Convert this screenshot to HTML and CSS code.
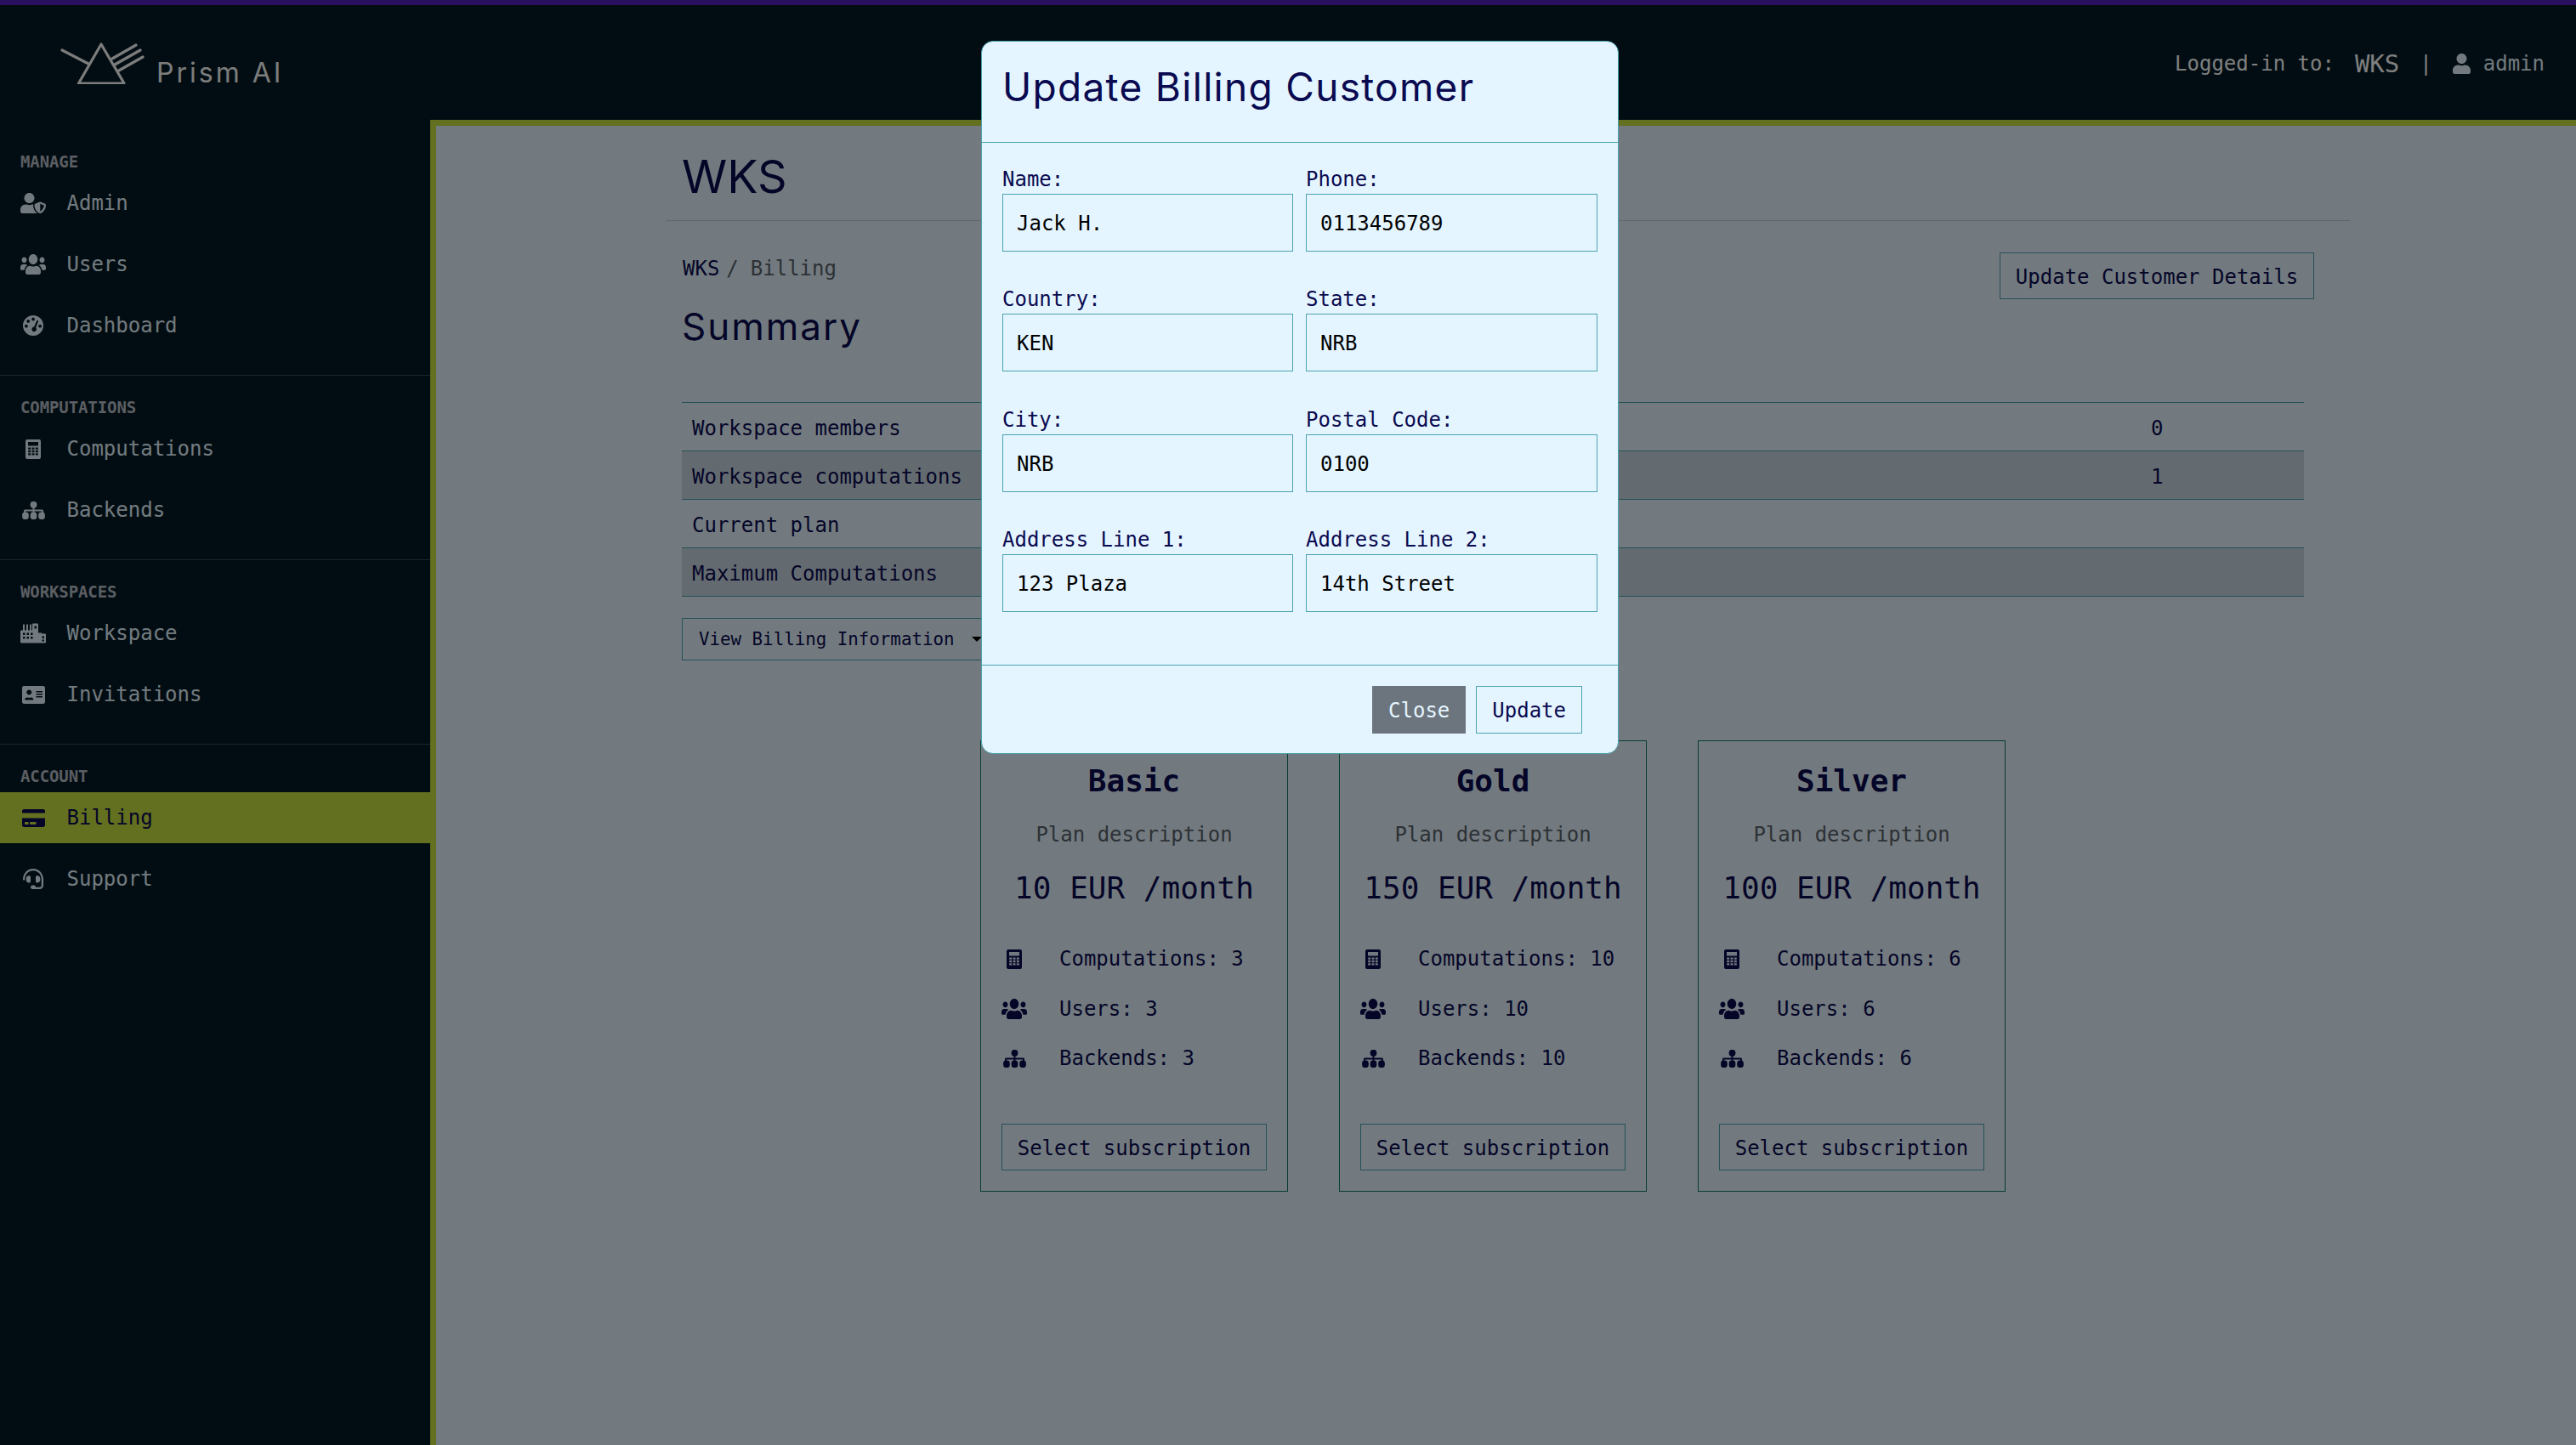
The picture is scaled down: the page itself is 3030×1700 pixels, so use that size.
FILE: index.html
```html
<!DOCTYPE html>
<html lang="en">
<head>
<meta charset="utf-8">
<title>Prism AI - Billing</title>
<link rel="stylesheet" href="styles.css">
</head>
<body>
<svg class="sprite" xmlns="http://www.w3.org/2000/svg">
  <symbol id="i-user" viewBox="0 0 448 512"><path d="M224 256c70.7 0 128-57.3 128-128S294.7 0 224 0 96 57.3 96 128s57.3 128 128 128zm89.6 32h-16.7c-22.2 10.2-46.9 16-72.9 16s-50.6-5.8-72.9-16h-16.7C60.2 288 0 348.2 0 422.4V464c0 26.5 21.5 48 48 48h352c26.5 0 48-21.5 48-48v-41.6c0-74.2-60.2-134.4-134.4-134.4z"/></symbol>
  <symbol id="i-admin" viewBox="0 0 640 512"><path d="M622.3 271.1l-115.2-45c-4.1-1.6-12.6-3.7-22.2 0l-115.2 45c-10.7 4.2-17.7 14-17.7 24.9 0 111.6 68.7 188.8 132.9 213.9 9.6 3.7 18 1.6 22.2 0C558.4 489.9 640 420.5 640 296c0-10.9-7-20.7-17.7-24.9zM496 462.4V273.3l95.5 37.3c-5.6 87.1-60.9 135.4-95.5 151.8zM224 256c70.7 0 128-57.3 128-128S294.7 0 224 0 96 57.3 96 128s57.3 128 128 128zm96 40c0-2.5.8-4.7 1.1-7.2-2.5-.1-4.9-.8-7.5-.8h-16.7c-22.2 10.2-46.9 16-72.9 16s-50.6-5.8-72.9-16h-16.7C60.2 288 0 348.2 0 422.4V464c0 26.5 21.5 48 48 48h352c6.8 0 13.3-1.5 19.2-4-54-42.9-99.2-116.7-99.2-212z"/></symbol>
  <symbol id="i-users" viewBox="0 32 640 448" preserveAspectRatio="none"><path d="M96 224c35.3 0 64-28.7 64-64s-28.7-64-64-64-64 28.7-64 64 28.7 64 64 64zm448 0c35.3 0 64-28.7 64-64s-28.7-64-64-64-64 28.7-64 64 28.7 64 64 64zm32 32h-64c-17.6 0-33.5 7.1-45.1 18.6 40.3 22.1 68.9 62 75.1 109.4h66c17.7 0 32-14.3 32-32v-32c0-35.3-28.7-64-64-64zm-256 0c61.9 0 112-50.1 112-112S381.9 32 320 32 208 82.1 208 144s50.1 112 112 112zm76.8 32h-8.3c-20.8 10-43.9 16-68.5 16s-47.6-6-68.5-16h-8.3C179.6 288 128 339.6 128 403.2V432c0 26.5 21.5 48 48 48h288c26.5 0 48-21.5 48-48v-28.8c0-63.6-51.6-115.2-115.2-115.2zm-223.7-13.4C161.5 263.1 145.6 256 128 256H64c-35.3 0-64 28.7-64 64v32c0 17.7 14.3 32 32 32h65.9c6.3-47.4 34.9-87.3 75.2-109.4z"/></symbol>
  <symbol id="i-gauge" viewBox="0 0 24 24"><path fill-rule="evenodd" d="M12 0a12 12 0 1 0 0 24a12 12 0 1 0 0-24zM12 2.6a1.9 1.9 0 1 0 0 3.8a1.9 1.9 0 1 0 0-3.8zM6.2 5a1.9 1.9 0 1 0 0 3.8a1.9 1.9 0 1 0 0-3.8zM3.9 10.8a1.9 1.9 0 1 0 0 3.8a1.9 1.9 0 1 0 0-3.8zM20.1 10.8a1.9 1.9 0 1 0 0 3.8a1.9 1.9 0 1 0 0-3.8zM16.6 5.6L13.1 13.6a2.8 2.8 0 1 0 2.1 .9L18.2 6.4z"/></symbol>
  <symbol id="i-calc" viewBox="0 0 18 23"><path fill-rule="evenodd" d="M2 0H16Q18 0 18 2V21Q18 23 16 23H2Q0 23 0 21V2Q0 0 2 0ZM3 3V7.4H15V3ZM3.2 9.4V11.8H6.2V9.4ZM7.5 9.4V11.8H10.5V9.4ZM11.8 9.4V11.8H14.8V9.4ZM3.2 12.8V15.2H6.2V12.8ZM7.5 12.8V15.2H10.5V12.8ZM11.8 12.8V15.2H14.8V12.8ZM3.2 16.2V18.6H6.2V16.2ZM7.5 16.2V18.6H10.5V16.2ZM11.8 16.2V18.6H14.8V16.2Z"/></symbol>
  <symbol id="i-tree" viewBox="0 0 28 22"><path d="M13 6h2v4h9.5q1.5 0 1.5 1.5V14h-2v-2h-9v2h-2v-2H4v2H2v-2.500Q2 10 3.500 10H13z"/><rect x="10" y="0" width="8" height="8" rx="3.500"/><rect x="0" y="13" width="8" height="9" rx="3.500"/><rect x="10" y="13" width="8" height="9" rx="3.500"/><rect x="20" y="13" width="8" height="9" rx="3.500"/></symbol>
  <symbol id="i-city" viewBox="0 0 30 23"><path fill-rule="evenodd" d="M1 23Q0 23 0 22V9Q0 8 1 8H3V1H5V8H7V1H9V8H11V1H13V8H14V1Q14 0 15 0H20Q21 0 21 1V11H25V12H29Q30 12 30 13V22Q30 23 29 23ZM3 11V13.500H5.500V11ZM7.500 11V13.500H10V11ZM12 11V13.500H14.500V11ZM3 15.500V18H5.500V15.500ZM7.500 15.500V18H10V15.500ZM12 15.500V18H14.500V15.500ZM16.500 3V6H19V3ZM25.500 15V17.500H28V15ZM25.500 19V21H28V19Z"/></symbol>
  <symbol id="i-idcard" viewBox="0 0 576 448"><path fill-rule="evenodd" d="M528 0H48C21.500 0 0 21.500 0 48v352c0 26.500 21.500 48 48 48h480c26.500 0 48-21.500 48-48V48c0-26.500-21.500-48-48-48zM360 128c-4.400 0-8 3.600-8 8v16c0 4.400 3.600 8 8 8h144c4.400 0 8-3.600 8-8v-16c0-4.400-3.600-8-8-8zm0 64c-4.400 0-8 3.600-8 8v16c0 4.400 3.600 8 8 8h144c4.400 0 8-3.600 8-8v-16c0-4.400-3.600-8-8-8zm0 64c-4.400 0-8 3.600-8 8v16c0 4.400 3.600 8 8 8h144c4.400 0 8-3.600 8-8v-16c0-4.400-3.600-8-8-8zM176 96c35.300 0 64 28.700 64 64s-28.700 64-64 64-64-28.700-64-64 28.700-64 64-64zM67.100 332.200C75.500 306.500 99.600 288 128 288h8.200c12.300 5.100 25.700 8 39.800 8s27.600-2.900 39.800-8h8.200c28.400 0 52.500 18.500 60.900 44.200 3.200 9.900-5.200 19.800-15.600 19.800H82.700c-10.400 0-18.800-10-15.600-19.800z"/></symbol>
  <symbol id="i-card" viewBox="0 0 576 448"><path d="M0 400c0 26.500 21.500 48 48 48h480c26.500 0 48-21.500 48-48V224H0v176zm192-68c0-6.600 5.400-12 12-12h136c6.600 0 12 5.400 12 12v40c0 6.600-5.400 12-12 12H204c-6.600 0-12-5.400-12-12v-40zm-128 0c0-6.600 5.400-12 12-12h72c6.600 0 12 5.400 12 12v40c0 6.600-5.400 12-12 12H76c-6.600 0-12-5.400-12-12v-40zM576 48v48H0V48C0 21.500 21.500 0 48 0h480c26.500 0 48 21.500 48 48z"/></symbol>
  <symbol id="i-headset" viewBox="0 0 512 512"><path d="M192 208c0-17.670-14.330-32-32-32h-16c-35.350 0-64 28.650-64 64v48c0 35.350 28.650 64 64 64h16c17.670 0 32-14.330 32-32V208zm176 144c35.350 0 64-28.650 64-64v-48c0-35.350-28.650-64-64-64h-16c-17.670 0-32 14.330-32 32v112c0 17.670 14.330 32 32 32h16zM256 0C113.180 0 4.580 118.830 0 256v16c0 8.840 7.160 16 16 16h16c8.840 0 16-7.160 16-16v-16c0-114.690 93.310-208 208-208s208 93.310 208 208h-.12c.08 2.430.12 165.720.12 165.720 0 23.350-18.930 42.280-42.280 42.280H320c0-26.510-21.490-48-48-48h-32c-26.510 0-48 21.490-48 48s21.490 48 48 48h181.720c49.860 0 90.280-40.420 90.280-90.280V256C507.420 118.830 398.820 0 256 0z"/></symbol>
</svg>

<header class="navbar">
  <div class="brand">
    <svg class="logo" viewBox="0 0 100 50"><path d="M49 3L22.500 49H76z"/><path d="M3 10L34 26"/><path d="M62 20L90 4M65 27L95 10M68 35L98 18"/></svg>
    <span class="brand-name">Prism AI</span>
  </div>
  <div class="session">
    <span>Logged-in to:</span>
    <span class="session-ws">WKS</span>
    <span>|</span>
    <span class="session-user"><svg class="i-user"><use href="#i-user"/></svg><span>admin</span></span>
  </div>
</header>

<div class="shell">
  <nav class="sidebar">
    <section class="side-group">
      <h6 class="side-label">MANAGE</h6>
      <a class="side-item"><span class="side-ic"><svg class="w30"><use href="#i-admin"/></svg></span>Admin</a>
      <a class="side-item"><span class="side-ic"><svg class="w30"><use href="#i-users"/></svg></span>Users</a>
      <a class="side-item"><span class="side-ic"><svg class="w24"><use href="#i-gauge"/></svg></span>Dashboard</a>
    </section>
    <section class="side-group">
      <h6 class="side-label">COMPUTATIONS</h6>
      <a class="side-item"><span class="side-ic"><svg class="w18"><use href="#i-calc"/></svg></span>Computations</a>
      <a class="side-item"><span class="side-ic"><svg class="w27"><use href="#i-tree"/></svg></span>Backends</a>
    </section>
    <section class="side-group">
      <h6 class="side-label">WORKSPACES</h6>
      <a class="side-item"><span class="side-ic"><svg class="w30"><use href="#i-city"/></svg></span>Workspace</a>
      <a class="side-item"><span class="side-ic"><svg class="w27"><use href="#i-idcard"/></svg></span>Invitations</a>
    </section>
    <section class="side-group side-group-last">
      <h6 class="side-label">ACCOUNT</h6>
      <a class="side-item side-item-active"><span class="side-ic"><svg class="w27"><use href="#i-card"/></svg></span>Billing</a>
      <a class="side-item"><span class="side-ic"><svg class="w24"><use href="#i-headset"/></svg></span>Support</a>
    </section>
  </nav>

  <main class="main">
    <div class="content">
      <h1 class="page-title">WKS</h1>
      <div class="summary-head">
        <div>
          <div class="crumbs"><span>WKS</span><span class="crumb-sep">/</span><span class="crumb-cur">Billing</span></div>
          <h2 class="summary-title">Summary</h2>
        </div>
        <button class="btn btn-outline btn-details">Update Customer Details</button>
      </div>
      <table class="summary-table">
        <tr><td class="col-name">Workspace members</td><td>0</td></tr>
        <tr class="striped"><td class="col-name">Workspace computations</td><td>1</td></tr>
        <tr><td class="col-name">Current plan</td><td></td></tr>
        <tr class="striped"><td class="col-name">Maximum Computations</td><td></td></tr>
      </table>
      <button class="btn btn-outline btn-billing">View Billing Information<span class="caret"></span></button>
      <div class="plans">
        <article class="plan">
          <h3 class="plan-name">Basic</h3>
          <p class="plan-desc">Plan description</p>
          <p class="plan-price">10 EUR /month</p>
          <ul class="plan-list">
            <li><span class="plan-ic"><svg class="w18"><use href="#i-calc"/></svg></span>Computations: 3</li>
            <li><span class="plan-ic"><svg class="w30"><use href="#i-users"/></svg></span>Users: 3</li>
            <li><span class="plan-ic"><svg class="w27"><use href="#i-tree"/></svg></span>Backends: 3</li>
          </ul>
          <button class="btn btn-outline btn-select">Select subscription</button>
        </article>
        <article class="plan">
          <h3 class="plan-name">Gold</h3>
          <p class="plan-desc">Plan description</p>
          <p class="plan-price">150 EUR /month</p>
          <ul class="plan-list">
            <li><span class="plan-ic"><svg class="w18"><use href="#i-calc"/></svg></span>Computations: 10</li>
            <li><span class="plan-ic"><svg class="w30"><use href="#i-users"/></svg></span>Users: 10</li>
            <li><span class="plan-ic"><svg class="w27"><use href="#i-tree"/></svg></span>Backends: 10</li>
          </ul>
          <button class="btn btn-outline btn-select">Select subscription</button>
        </article>
        <article class="plan">
          <h3 class="plan-name">Silver</h3>
          <p class="plan-desc">Plan description</p>
          <p class="plan-price">100 EUR /month</p>
          <ul class="plan-list">
            <li><span class="plan-ic"><svg class="w18"><use href="#i-calc"/></svg></span>Computations: 6</li>
            <li><span class="plan-ic"><svg class="w30"><use href="#i-users"/></svg></span>Users: 6</li>
            <li><span class="plan-ic"><svg class="w27"><use href="#i-tree"/></svg></span>Backends: 6</li>
          </ul>
          <button class="btn btn-outline btn-select">Select subscription</button>
        </article>
      </div>
    </div>
  </main>
</div>

<div class="backdrop"></div>

<div class="modal">
  <div class="modal-header"><h4 class="modal-title">Update Billing Customer</h4></div>
  <form class="modal-body">
    <label class="field"><span class="field-label">Name:</span><input class="field-input" value="Jack H."></label>
    <label class="field"><span class="field-label">Phone:</span><input class="field-input" value="0113456789"></label>
    <label class="field"><span class="field-label">Country:</span><input class="field-input" value="KEN"></label>
    <label class="field"><span class="field-label">State:</span><input class="field-input" value="NRB"></label>
    <label class="field"><span class="field-label">City:</span><input class="field-input" value="NRB"></label>
    <label class="field"><span class="field-label">Postal Code:</span><input class="field-input" value="0100"></label>
    <label class="field"><span class="field-label">Address Line 1:</span><input class="field-input" value="123 Plaza"></label>
    <label class="field"><span class="field-label">Address Line 2:</span><input class="field-input" value="14th Street"></label>
  </form>
  <div class="modal-footer">
    <button class="btn btn-close">Close</button>
    <button class="btn btn-update">Update</button>
  </div>
</div>
</body>
</html>
```

FILE: styles.css
```css
* { box-sizing: border-box; }
html, body { margin: 0; height: 100%; }
body {
  width: 3030px;
  height: 1700px;
  overflow: hidden;
  display: flex;
  flex-direction: column;
  background: #031a24;
  color: #0a0a50;
  font-family: "DejaVu Sans Mono", "Liberation Mono", monospace;
  font-size: 24px;
  line-height: 36px;
  border-top: 6px solid #541ebc;
}
svg { fill: currentColor; display: block; }
.sprite { position: absolute; width: 0; height: 0; }
h1, h2, h3, h4, h6, p, ul { margin: 0; padding: 0; font-weight: 400; }
ul { list-style: none; }

/* top bar */
.navbar {
  height: 135px;
  flex: none;
  display: flex;
  justify-content: space-between;
  align-items: center;
  color: #fff;
  padding: 0 37px 0 70px;
}
.brand { display: flex; align-items: flex-end; gap: 14px; color: #f8f8f8; }
.logo {
  width: 100px;
  height: 50px;
  fill: none;
  stroke: currentColor;
  stroke-width: 3.2;
  stroke-linecap: round;
  stroke-linejoin: round;
}
.brand-name {
  font-family: "Inter", "Noto Sans", sans-serif;
  font-size: 32px;
  line-height: 40px;
  letter-spacing: 3px;
  margin-bottom: -7px;
}
.session { display: flex; align-items: center; gap: 24px; padding-top: 3px; }
.session-ws { font-size: 29px; }
.session-user { display: flex; align-items: center; gap: 15px; color: #e5f5ff; }
.i-user { width: 21px; height: 24px; }

/* layout */
.shell { flex: 1; display: flex; min-height: 0; }
.sidebar { width: 506px; flex: none; color: #e5f5ff; }
.side-group { padding: 25px 0 16px; border-bottom: 1px solid #3a4c55; }
.side-group:first-child { padding-top: 37px; }
.side-group-last { border-bottom: 0; }
.side-label {
  font-size: 19px;
  line-height: 24px;
  font-weight: 700;
  color: #b7bcc4;
  padding-left: 24px;
  margin-bottom: 7px;
  letter-spacing: -.1px;
}
.side-item {
  display: flex;
  align-items: center;
  height: 60px;
  margin-bottom: 12px;
  padding-left: 24px;
  gap: 24.5px;
}
.side-item-active {
  background: #c5e03f;
  color: #0a0a50;
}
.side-ic { width: 30px; display: flex; justify-content: center; }
.w30 { width: 30px; height: 24px; }
.w27 { width: 27px; height: 21px; }
.w24 { width: 24px; height: 24px; }
.w18 { width: 18px; height: 23px; }

/* main */
.main {
  flex: 1;
  background: #e5f5ff;
  border-left: 7px solid #c5e03f;
  border-top: 7px solid #c5e03f;
  padding-left: 271px;
}
.content { width: 1980px; }
.page-title {
  font-family: "Inter", "Noto Sans", sans-serif;
  font-size: 54px;
  line-height: 56px;
  padding: 32px 0 23px 18px;
  border-bottom: 1px solid rgba(0, 0, 0, .16);
}
.summary-head {
  display: flex;
  justify-content: space-between;
  align-items: flex-start;
  width: 1919px;
  margin: 36px 0 0 19px;
}
.crumbs { display: flex; line-height: 36px; padding-top: 2px; margin-bottom: -2px; }
.crumb-sep { padding: 0 16px 0 8px; color: #5a636b; }
.crumb-cur { color: #5a636b; margin-left: -2px; }
.summary-title {
  font-family: "Inter", "Noto Sans", sans-serif;
  font-size: 44px;
  line-height: 56px;
  letter-spacing: 2px;
  margin: 24px 0 0 -1px;
}
.btn {
  font-family: inherit;
  font-size: 24px;
  line-height: 1;
  border: 1px solid #4ba3b0;
  background: transparent;
  color: #0a0a50;
  padding: 2px 18px 0;
  cursor: pointer;
  display: inline-block;
  border-radius: 0;
  white-space: nowrap;
}
.btn-details { height: 55px; width: 370px; padding: 2px 0 0; margin-top: 1px; }

.summary-table {
  width: 1908px;
  margin: 61px 0 0 18px;
  border-collapse: collapse;
  border-bottom: 1px solid #4ba3b0;
}
.summary-table td { height: 57px; padding: 3px 11px 0 12px; border-top: 1px solid #4ba3b0; }
.summary-table .col-name { width: 1716px; }
.striped td { background: rgba(0, 0, 0, .12); }
.btn-billing {
  display: flex;
  align-items: center;
  height: 50px;
  width: 370px;
  margin: 25px 0 0 18px;
  font-size: 20.800px;
  padding: 0 19px;
}
.caret {
  margin-left: 20px;
  border-top: 6px solid #000;
  border-left: 6px solid transparent;
  border-right: 6px solid transparent;
}

/* plans */
.plans { display: flex; justify-content: center; gap: 60px; width: 1908px; margin: 94px 0 0 18px; }
.plan {
  width: 362px;
  height: 531px;
  border: 1px solid #0e7a5c;
  padding: 25px 24px 24px;
  display: flex;
  flex-direction: column;
  align-items: center;
}
.plan-name { font-size: 36px; line-height: 44px; font-weight: 700; }
.plan-desc { color: #5a636b; margin-top: 23px; }
.plan-price { font-size: 36px; line-height: 50px; margin-top: 20px; }
.plan-list { width: 100%; margin-top: 29px; }
.plan-list li { display: flex; align-items: center; height: 58.500px; }
.plan-ic { width: 30px; flex: none; margin-right: 38px; display: flex; justify-content: center; }
.btn-select { width: 100%; height: 55px; margin-top: auto; padding: 2px 0 0; }

/* modal */
.backdrop { position: fixed; inset: 0; background: rgba(0, 0, 0, .5); }
.modal {
  position: fixed;
  left: 1154px;
  top: 48px;
  width: 750px;
  background: #e5f5ff;
  border: 1px solid #4ba3b0;
  border-radius: 14px;
}
.modal-header { height: 119px; padding: 0 25px 12px; border-bottom: 1px solid #4ba3b0; display: flex; align-items: center; }
.modal-title {
  font-family: "Inter", "Noto Sans", sans-serif;
  font-size: 46px;
  line-height: 56px;
  letter-spacing: 1.300px;
  margin-left: -1px;
}
.modal-body {
  display: grid;
  grid-template-columns: 342px 343px;
  column-gap: 15px;
  row-gap: 42.330px;
  padding: 29px 24px 62px;
}
.field { display: block; }
.field-label { display: block; line-height: 28px; margin-bottom: 3px; }
.field-input {
  display: block;
  width: 100%;
  height: 68px;
  padding: 2px 16px 0;
  border: 1px solid #4ba3b0;
  background: transparent;
  color: #000;
  font-family: inherit;
  font-size: 24px;
  border-radius: 0;
  outline: none;
}
.modal-footer {
  border-top: 1px solid #4ba3b0;
  display: flex;
  justify-content: flex-end;
  gap: 12px;
  padding: 24px 42px 23px 0;
}
.modal-footer .btn { height: 56px; }
.btn-close { background: #6c757d; border-color: #6c757d; color: #e5f5ff; }
```
